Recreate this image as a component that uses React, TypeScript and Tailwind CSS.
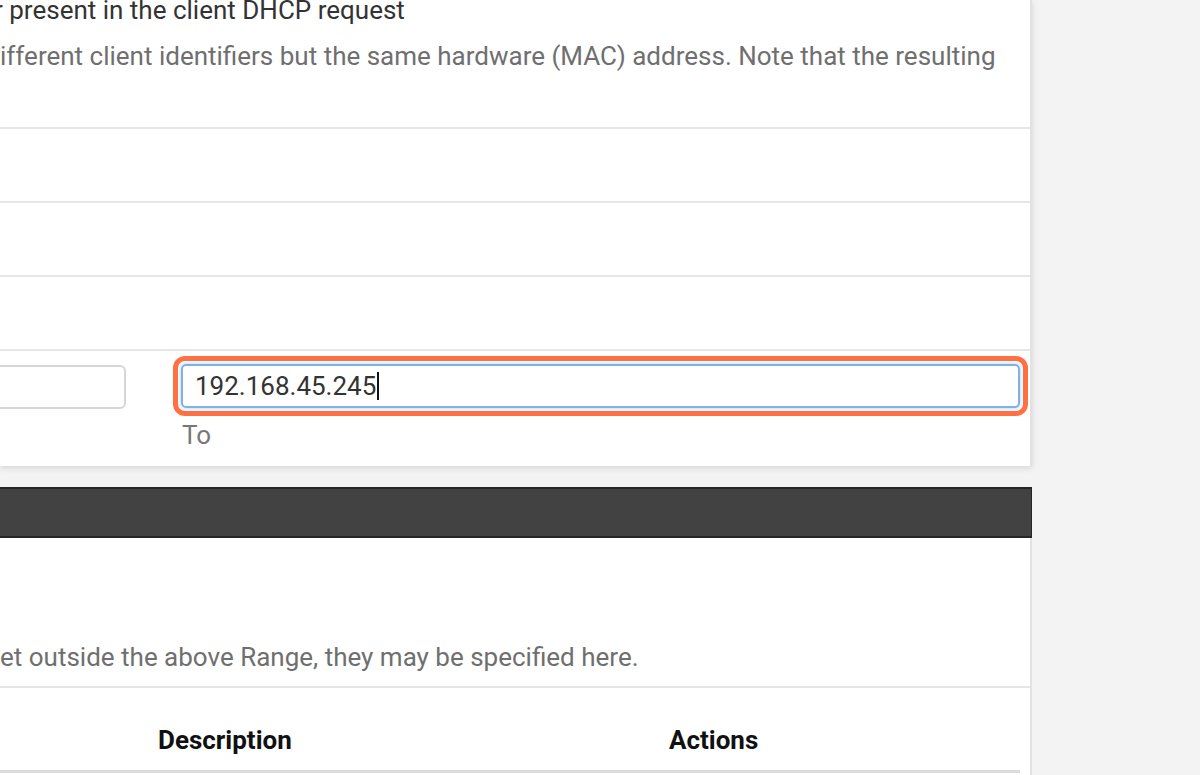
export default function App() {
  return (
    <div className="w-[1200px] h-[775px] overflow-hidden bg-[#f3f3f3] flex font-['Roboto',sans-serif]">
      <div className="w-[1032px] flex flex-col">
        {/* general options panel */}
        <div className="bg-white border-r-2 border-[#e2e2e2] shadow-[0_2px_6px_rgba(0,0,0,0.12)] overflow-hidden">
          <div className="h-[129px] border-b-2 border-[#e6e6e6] overflow-hidden">
            <p className="text-[26px] leading-[28px] text-[#333] -ml-[6px] -mt-[4px] whitespace-nowrap">
              r present in the client DHCP request
            </p>
            <p className="text-[26px] leading-[28px] text-[#6f6f6f] mt-[18px] whitespace-nowrap">
              ifferent client identifiers but the same hardware (MAC) address. Note that the resulting
            </p>
          </div>
          <div className="h-[74px] border-b-2 border-[#e6e6e6]" />
          <div className="h-[74px] border-b-2 border-[#e6e6e6]" />
          <div className="h-[74px] border-b-2 border-[#e6e6e6]" />
          <div className="h-[115px] flex pt-[5px]">
            <div className="w-[146px] -ml-[20px] h-[44px] mt-[9px] border-2 border-[#d6d6d6] rounded-md shrink-0" />
            <div className="flex-1 ml-[47px] mr-[2px] flex flex-col">
              <div className="rounded-[12px] border-[5px] border-[#ff7043] p-[3px]">
                <div className="h-[44px] rounded-[5px] border-2 border-[#7fb2e5] shadow-[0_0_4px_rgba(102,175,233,0.6)] flex items-center px-[12px]">
                  <span className="text-[26px] text-[#333]">192.168.45.245</span>
                  <span className="w-[1.5px] h-[28px] bg-[#111] ml-[1px]" />
                </div>
              </div>
              <span className="text-[26px] leading-[28px] text-[#777] ml-[9px] mt-[5px]">To</span>
            </div>
          </div>
        </div>

        {/* additional pools panel */}
        <div className="mt-[21px] h-[51px] bg-[#424242] border-y-2 border-[#262626] border-r border-r-[#262626]" />
        <div className="flex-1 bg-white border-r-2 border-[#e2e2e2] flex flex-col">
          <div className="h-[150px] border-b-2 border-[#e6e6e6] flex items-end pb-[15px]">
            <p className="text-[26px] leading-[28px] text-[#6f6f6f] whitespace-nowrap">
              et outside the above Range, they may be specified here.
            </p>
          </div>
          <div className="mr-[10px] h-[85px] border-b-[3px] border-[#dcdcdc] flex items-end pb-[16px]">
            <span className="ml-[158px] w-[511px] text-[26px] leading-[28px] font-bold text-[#111]">Description</span>
            <span className="text-[26px] leading-[28px] font-bold text-[#111]">Actions</span>
          </div>
        </div>
      </div>
    </div>
  );
}
